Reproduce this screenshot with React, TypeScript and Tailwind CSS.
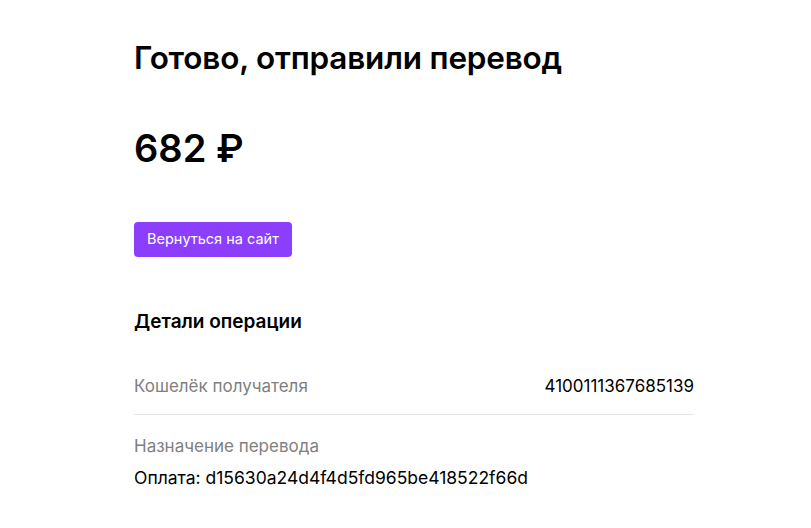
export default function App() {
  return (
    <div className="min-h-screen bg-white text-black" style={{ fontFamily: "Inter, 'Noto Sans', sans-serif" }}>
      <div className="w-[560px] ml-[134px] pt-[38px]">
        <h1 className="text-[31.5px] leading-[40px] font-semibold tracking-[-0.2px]">Готово, отправили перевод</h1>
        <div className="mt-[46px] text-[38px] leading-[48px] font-semibold">682 ₽</div>
        <button className="mt-[50px] h-[35px] px-[13px] rounded-[4px] bg-[#8b3ffd] text-white text-[14.5px] leading-none">
          Вернуться на сайт
        </button>
        <h2 className="mt-[53px] text-[19px] leading-[24px] font-semibold">Детали операции</h2>
        <div className="mt-[40px] flex items-baseline justify-between pb-[16px] border-b border-[#e6e6e6]">
          <span className="text-[17px] leading-[24px] text-[#808080]">Кошелёк получателя</span>
          <span className="text-[17px] leading-[24px]">4100111367685139</span>
        </div>
        <div className="pt-[19px] flex flex-col gap-[8px]">
          <span className="text-[17px] leading-[24px] text-[#808080]">Назначение перевода</span>
          <span className="text-[17.5px] leading-[24px]">Оплата: d15630a24d4f4d5fd965be418522f66d</span>
        </div>
      </div>
    </div>
  );
}
